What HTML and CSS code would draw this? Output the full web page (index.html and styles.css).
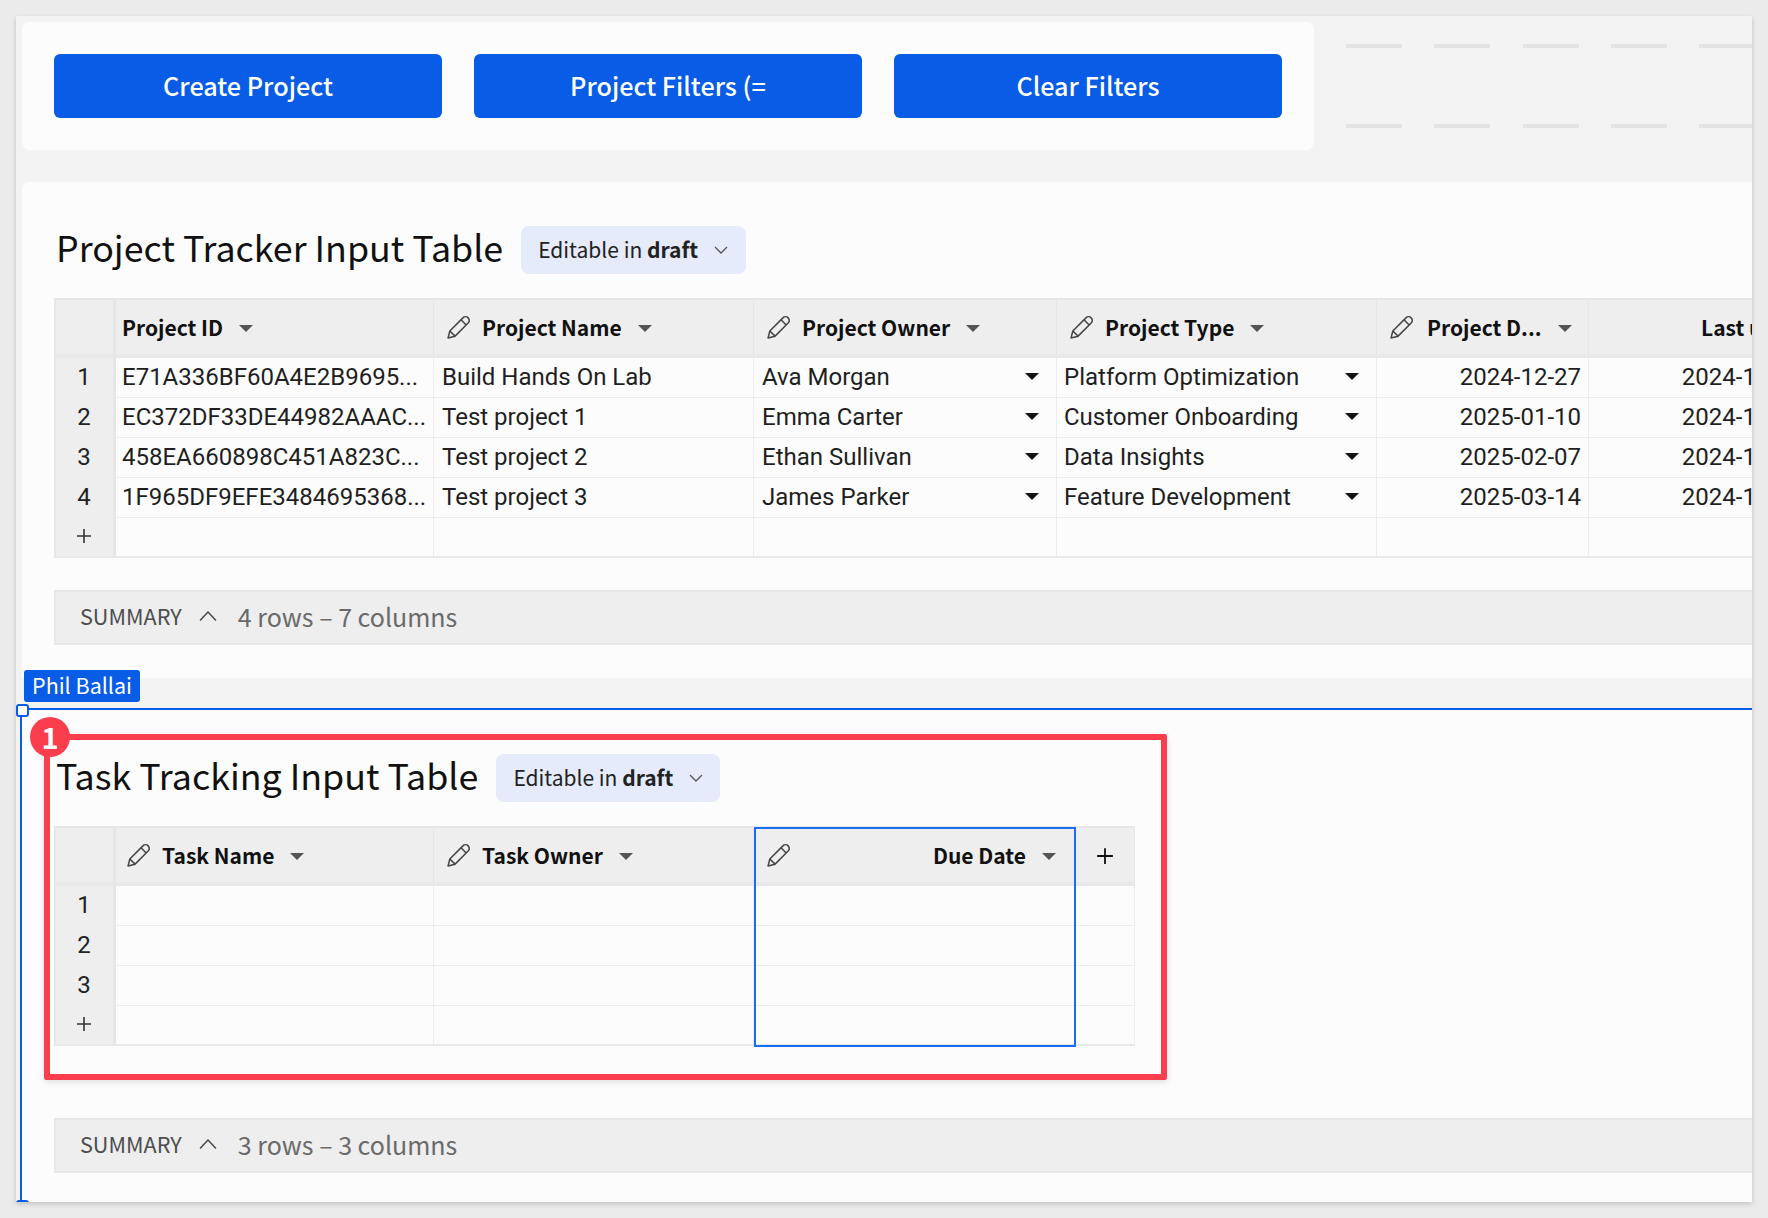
FILE: index.html
```html
<!DOCTYPE html>
<html lang="en">
<head>
    <meta charset="UTF-8">
    <title>Project Tracker</title>
<link rel="stylesheet" href="styles.css">
</head>
<body>
<svg class="defs" width="0" height="0">
    <symbol id="pencil" viewBox="0 0 22 22">
        <path d="M1 21 L2.6 14.6 L14.6 2.6 a3 3 0 0 1 4.8 4.8 L7.4 19.4 Z M2.6 14.6 L7.4 19.4 M12.8 4.4 L17.6 9.2" fill="none" stroke="#444" stroke-width="1.4" stroke-linejoin="round"/>
    </symbol>
    <symbol id="plus" viewBox="0 0 16 16">
        <path d="M8 1 V15 M1 8 H15" fill="none" stroke="currentColor" stroke-width="1.6"/>
    </symbol>
    <symbol id="chev-down" viewBox="0 0 14 8">
        <path d="M1 1 L7 7 L13 1" fill="none" stroke="#555" stroke-width="1.3"/>
    </symbol>
    <symbol id="chev-up" viewBox="0 0 18 10">
        <path d="M1 9.5 L9 1 L17 9.5" fill="none" stroke="#444" stroke-width="1.4"/>
    </symbol>
</svg>

<div class="sheet">
    <div class="top-row">
        <div class="panel-buttons">
            <a class="btn">Create Project</a>
            <a class="btn">Project Filters (=</a>
            <a class="btn">Clear Filters</a>
        </div>
        <div class="dashes">
            <div class="dash-row"></div>
            <div class="dash-row"></div>
        </div>
    </div>

    <div class="panel panel-first">
        <div class="title-row">
            <h2 class="title">Project Tracker Input Table</h2>
            <div class="chip chip-first">Editable in&nbsp;<b>draft</b><svg class="chev"><use href="#chev-down"/></svg></div>
        </div>
        <table class="grid grid-wide">
            <tr class="head">
                <th class="num"></th>
                <th class="w318"><div class="hd hd-plain">Project ID<i class="caret"></i></div></th>
                <th class="w320"><div class="hd"><svg class="pen"><use href="#pencil"/></svg>Project Name<i class="caret"></i></div></th>
                <th class="w303"><div class="hd"><svg class="pen"><use href="#pencil"/></svg>Project Owner<i class="caret"></i></div></th>
                <th class="w320"><div class="hd"><svg class="pen"><use href="#pencil"/></svg>Project Type<i class="caret"></i></div></th>
                <th class="w212"><div class="hd"><svg class="pen pen-wide"><use href="#pencil"/></svg>Project D...<i class="caret"></i></div></th>
                <th class="w222"><div class="hd hd-last">Last updated</div></th>
            </tr>
            <tr>
                <td class="num">1</td>
                <td class="first">E71A336BF60A4E2B9695...</td>
                <td>Build Hands On Lab</td>
                <td><div class="pick">Ava Morgan<i class="caret dark"></i></div></td>
                <td class="type"><div class="pick">Platform Optimization<i class="caret dark"></i></div></td>
                <td class="date">2024-12-27</td>
                <td class="date">2024-12-20</td>
            </tr>
            <tr>
                <td class="num">2</td>
                <td class="first">EC372DF33DE44982AAAC...</td>
                <td>Test project 1</td>
                <td><div class="pick">Emma Carter<i class="caret dark"></i></div></td>
                <td class="type"><div class="pick">Customer Onboarding<i class="caret dark"></i></div></td>
                <td class="date">2025-01-10</td>
                <td class="date">2024-12-20</td>
            </tr>
            <tr>
                <td class="num">3</td>
                <td class="first">458EA660898C451A823C...</td>
                <td>Test project 2</td>
                <td><div class="pick">Ethan Sullivan<i class="caret dark"></i></div></td>
                <td class="type"><div class="pick">Data Insights<i class="caret dark"></i></div></td>
                <td class="date">2025-02-07</td>
                <td class="date">2024-12-20</td>
            </tr>
            <tr>
                <td class="num">4</td>
                <td class="first">1F965DF9EFE3484695368...</td>
                <td>Test project 3</td>
                <td><div class="pick">James Parker<i class="caret dark"></i></div></td>
                <td class="type"><div class="pick">Feature Development<i class="caret dark"></i></div></td>
                <td class="date">2025-03-14</td>
                <td class="date">2024-12-20</td>
            </tr>
            <tr class="last">
                <td class="num"><svg class="add"><use href="#plus"/></svg></td>
                <td></td><td></td><td></td><td></td><td></td><td></td>
            </tr>
        </table>
        <div class="summary">
            <span class="sum-label">SUMMARY</span>
            <svg class="chev-up"><use href="#chev-up"/></svg>
            <span class="sum-count">4 rows – 7 columns</span>
        </div>
    </div>

    <div class="panel panel-second">
        <div class="title-row">
            <h2 class="title">Task Tracking Input Table</h2>
            <div class="chip chip-second">Editable in&nbsp;<b>draft</b><svg class="chev"><use href="#chev-down"/></svg></div>
        </div>
        <table class="grid grid-task">
            <tr class="head">
                <th class="num"></th>
                <th class="w318"><div class="hd hd-first"><svg class="pen"><use href="#pencil"/></svg>Task Name<i class="caret"></i></div></th>
                <th class="w320"><div class="hd"><svg class="pen"><use href="#pencil"/></svg>Task Owner<i class="caret"></i></div></th>
                <th class="w321"><div class="hd hd-right"><svg class="pen"><use href="#pencil"/></svg><span class="push">Due Date</span><i class="caret"></i></div></th>
                <th class="w60 add-col"><svg class="add add-dark"><use href="#plus"/></svg></th>
            </tr>
            <tr><td class="num">1</td><td></td><td></td><td></td><td></td></tr>
            <tr><td class="num">2</td><td></td><td></td><td></td><td></td></tr>
            <tr><td class="num">3</td><td></td><td></td><td></td><td></td></tr>
            <tr class="last"><td class="num"><svg class="add"><use href="#plus"/></svg></td><td></td><td></td><td></td><td></td></tr>
        </table>
        <div class="summary summary-low">
            <span class="sum-label">SUMMARY</span>
            <svg class="chev-up"><use href="#chev-up"/></svg>
            <span class="sum-count">3 rows – 3 columns</span>
        </div>
    </div>

    <!-- overlays: selection, user tag and the annotation -->
    <div class="sel-line-top"></div>
    <div class="sel-line-left"></div>
    <div class="sel-handle"></div>
    <div class="sel-handle sel-handle-low"></div>
    <div class="user-tag">Phil Ballai</div>
    <div class="col-select"></div>
    <div class="red-box"></div>
    <div class="red-badge">1</div>
</div>
</body>
</html>
```

FILE: styles.css
```css
*{
    box-sizing: border-box;
}
html,body{
    margin: 0;
    height: 1218px;
    overflow: hidden;
}
body{
    background-color: #ebebeb;
    padding: 16px 16px 0 16px;
    font-family: "Noto Sans CJK SC", "Noto Sans", sans-serif;
    color: #111;
}
.defs{
    position: absolute;
}
.sheet{
    position: relative;
    width: 1736px;
    height: 1186px;
    background-color: #f3f3f3;
    overflow: hidden;
    box-shadow: 0 2px 5px rgba(0,0,0,0.18);
}

/* button row */
.top-row{
    display: flex;
    padding: 6px 0 0 6px;
    height: 166px;
}
.panel-buttons{
    display: flex;
    gap: 32px;
    padding: 32px;
    width: 1292px;
    height: 128px;
    background-color: #fcfcfc;
    border-radius: 8px;
}
.btn{
    display: flex;
    align-items: center;
    justify-content: center;
    width: 388px;
    height: 64px;
    padding-bottom: 2px;
    background-color: #085ce5;
    border-radius: 6px;
    color: #fff;
    font-size: 25.2px;
    font-weight: 500;
}
.dashes{
    display: flex;
    flex-direction: column;
    gap: 76px;
    margin: 22px 0 0 32px;
    flex: 1;
}
.dash-row{
    height: 4px;
    background-image: repeating-linear-gradient(to right, #e3e3e3 0, #e3e3e3 56px, transparent 56px, transparent 88.3px);
}

/* table panels */
.panel{
    margin-left: 6px;
    padding: 44px 0 0 32px;
    background-color: #fcfcfc;
    overflow: hidden;
}
.panel-first{
    height: 496px;
    border-radius: 8px 0 0 0;
}
.panel-second{
    margin-top: 32px;
    height: 492px;
}
.title-row{
    display: flex;
    align-items: center;
    gap: 18px;
    height: 48px;
    padding-left: 2px;
    margin-bottom: 24px;
}
.title{
    margin: 0;
    padding-bottom: 8px;
    font-size: 35.8px;
    font-weight: 400;
    line-height: 48px;
    color: #111;
}
.chip{
    display: flex;
    align-items: center;
    height: 48px;
    padding: 0 0 2px 17px;
    background-color: #e5ebfa;
    border-radius: 8px;
    font-size: 21px;
    color: #222;
}
.chip b{
    font-weight: 700;
}
.chip-first{
    width: 225px;
}
.chip-second{
    width: 224px;
}
.chev{
    width: 14px;
    height: 8px;
    margin: 2px 0 0 16px;
}

/* grid */
.grid{
    border-collapse: separate;
    border-spacing: 0;
    table-layout: fixed;
    font-family: Roboto, "Liberation Sans", sans-serif;
    font-size: 24px;
    color: #1f1f1f;
}
.grid-wide{
    width: 1757px;
}
.grid-task{
    width: 1081px;
}
.grid tr{
    height: 40px;
}
.grid tr.head{
    height: 60px;
}
.grid th{
    padding: 0;
    background-color: #eeeeee;
    border-top: 2px solid #e7e7e7;
    border-bottom: 4px solid #e8e8e8;
    border-right: 1px solid #e6e6e6;
    text-align: left;
    font-weight: 400;
}
.grid td{
    padding: 0 7px 2px 8px;
    border-bottom: 1px solid #ececec;
    border-right: 1px solid #ececec;
    white-space: nowrap;
    overflow: hidden;
}
.grid tr.last td{
    border-bottom: 2px solid #e8e8e8;
}
.grid td.first{
    padding-left: 6px;
}
.grid td.type{
    padding-left: 7px;
}
.grid .num{
    width: 62px;
    padding: 0 1px 2px 0;
    background-color: #eeeeee;
    border-left: 2px solid #e7e7e7;
    border-right: 3px solid #e6e6e6;
    text-align: center;
    color: #222;
}
.w318{ width: 318px; }
.w320{ width: 320px; }
.w321{ width: 321px; }
.w303{ width: 303px; }
.w212{ width: 212px; }
.w222{ width: 222px; }
.w60{ width: 60px; }
.hd{
    display: flex;
    align-items: center;
    height: 54px;
    padding: 0 0 0 14px;
    font-family: "Noto Sans CJK SC", "Noto Sans", sans-serif;
    font-size: 21px;
    font-weight: 600;
    color: #111;
    white-space: nowrap;
}
.hd-plain{
    padding-left: 6px;
}
.hd-first{
    padding-left: 12px;
}
.hd-last{
    padding-left: 112px;
}
.push{
    margin-left: auto;
}
.pen{
    width: 24px;
    height: 24px;
    margin: 0 11px 0 -1px;
    flex: none;
}
.pen-wide{
    margin-right: 13px;
}
.caret{
    display: inline-block;
    flex: none;
    width: 0;
    height: 0;
    margin: 2px 18px 0 16px;
    border-left: 7px solid transparent;
    border-right: 7px solid transparent;
    border-top: 7px solid #555;
}
.caret.dark{
    margin: 0 10px 0 auto;
    border-top-color: #111;
}
.pick{
    display: flex;
    align-items: center;
}
.date{
    text-align: right;
}
.add{
    display: block;
    width: 16px;
    height: 16px;
    margin: 0 auto;
    color: #333;
}
.add-dark{
    color: #111;
    width: 18px;
    height: 18px;
}
.grid th.add-col{
    padding-top: 2px;
    text-align: center;
}

/* summary bar */
.summary{
    display: flex;
    align-items: center;
    width: 1800px;
    height: 55px;
    margin-top: 32px;
    padding: 0 0 4px 24px;
    background-color: #eeeeee;
    border: 2px solid #e8e8e8;
}
.summary-low{
    margin-top: 72px;
}
.sum-label{
    font-size: 21.6px;
    color: #4d4d4d;
}
.chev-up{
    width: 18px;
    height: 10px;
    margin: 0 21px 0 17px;
}
.sum-count{
    font-size: 25px;
    color: #6a6a6a;
}

/* overlays */
.sel-line-top{
    position: absolute;
    left: 4px;
    top: 692px;
    width: 1732px;
    height: 2px;
    background-color: #085ce5;
}
.sel-line-left{
    position: absolute;
    left: 4px;
    top: 692px;
    width: 2px;
    height: 494px;
    background-color: #085ce5;
}
.sel-handle{
    position: absolute;
    left: 0;
    top: 688px;
    width: 13px;
    height: 13px;
    background-color: #fff;
    border: 2px solid #085ce5;
    border-radius: 3px;
}
.sel-handle-low{
    top: 1184px;
}
.user-tag{
    position: absolute;
    left: 8px;
    top: 654px;
    width: 116px;
    height: 32px;
    background-color: #085ce5;
    border-radius: 3px;
    color: #fff;
    font-size: 21.5px;
    line-height: 30px;
    text-align: center;
}
.col-select{
    position: absolute;
    left: 738px;
    top: 811px;
    width: 322px;
    height: 220px;
    border: 2px solid #1a6cf0;
}
.red-box{
    position: absolute;
    left: 28px;
    top: 718px;
    width: 1123px;
    height: 346px;
    border: 6px solid #fb3e4d;
    border-radius: 2px;
    box-shadow: 0 2px 6px rgba(0,0,0,0.12);
}
.red-badge{
    position: absolute;
    left: 14px;
    top: 701px;
    width: 40px;
    height: 40px;
    background-color: #fb3e4d;
    border-radius: 50%;
    color: #fff;
    font-size: 29px;
    font-weight: 700;
    line-height: 39px;
    text-align: center;
}
```
